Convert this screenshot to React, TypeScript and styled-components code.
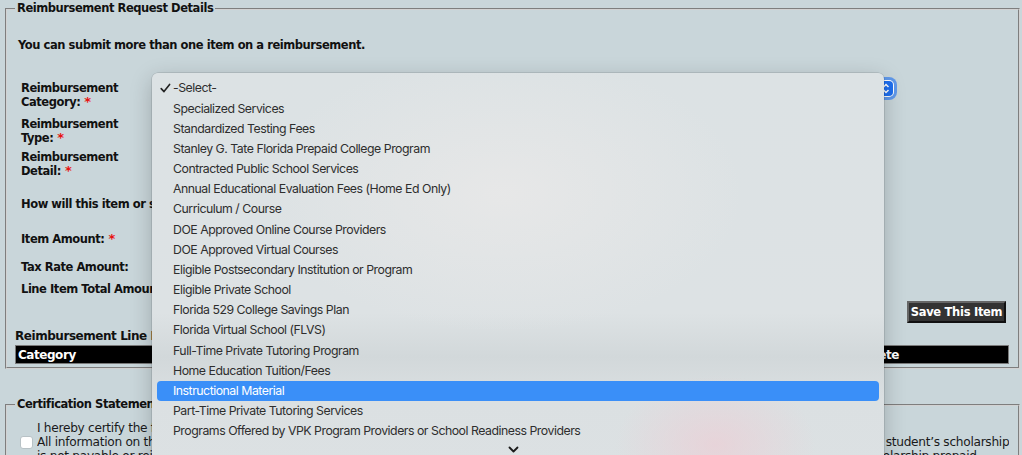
import React from "react";
import styled, { createGlobalStyle } from "styled-components";

const GlobalStyle = createGlobalStyle`
  html, body { margin: 0; padding: 0; }
  body {
    background: #c9d6da;
    font-family: "DejaVu Sans", Verdana, sans-serif;
    color: #111;
  }
`;

const Page = styled.div`
  position: relative;
  width: 1022px;
  height: 455px;
  overflow: hidden;
  background: #c9d6da;
`;

const FieldSet = styled.fieldset<{ $top?: number; $height?: number }>`
  margin: ${(p) => p.$top ?? 0}px 2px 0 5px;
  padding: 0 9px 0 9px;
  border: 2px groove #d2d2d2;
  height: ${(p) => (p.$height ? `${p.$height}px` : "auto")};
  box-sizing: border-box;
  min-width: 0;
`;

const Legend = styled.legend`
  padding: 0 2px;
  margin-left: -1px;
  font-family: "DejaVu Sans", Verdana, sans-serif;
  font-weight: bold;
  font-size: 11.5px;
  letter-spacing: -0.45px;
  line-height: 17px;
  color: #111;
`;

const Intro = styled.p`
  margin: 20px 0 0 2px;
  font-weight: bold;
  font-size: 11.5px;
  letter-spacing: -0.45px;
  line-height: 16px;
`;

const FormRow = styled.div<{ $gap: number }>`
  display: grid;
  grid-template-columns: 135px 1fr;
  align-items: start;
  margin-top: ${(p) => p.$gap}px;
  padding-left: 5px;
`;

const Label = styled.div`
  font-weight: bold;
  font-size: 11.5px;
  letter-spacing: -0.45px;
  line-height: 14px;
  white-space: nowrap;
`;

const Req = styled.span`
  color: #e8110e;
  font-size: 13px;
  margin-left: 4px;
`;

const SelectBox = styled.div`
  margin-top: -1px;
  width: 738px;
  height: 17px;
  border-radius: 5px;
  background: #fff;
  box-shadow: 0 0 0 3px rgba(40, 120, 245, 0.65);
  display: flex;
  justify-content: flex-end;
  align-items: center;
  padding-right: 1px;
  box-sizing: border-box;
`;

const Stepper = styled.div`
  width: 14px;
  height: 15px;
  border-radius: 4px;
  background: #1e6ff0;
  display: flex;
  align-items: center;
  justify-content: center;
`;

const ButtonRow = styled.div`
  display: flex;
  justify-content: flex-end;
  margin-top: 5px;
  padding-right: 3px;
`;

const SaveButton = styled.button`
  font-family: "DejaVu Sans", Verdana, sans-serif;
  font-weight: bold;
  font-size: 11.5px;
  letter-spacing: -0.3px;
  color: #fff;
  background: #333;
  border: 2px outset #666;
  height: 22px;
  width: 99px;
  padding: 0;
  cursor: pointer;
`;

const TableTitle = styled.div`
  margin-top: 6px;
  margin-left: -1px;
  font-weight: bold;
  font-size: 12px;
  letter-spacing: -0.45px;
  line-height: 14px;
`;

const HeaderBar = styled.div`
  margin: 2px 0 0 -1px;
  height: 17px;
  background: #000;
  border: 1px solid #7a7a7a;
  display: flex;
  justify-content: space-between;
  align-items: center;
  padding: 0 109px 0 2px;
  color: #fff;
  font-weight: bold;
  font-size: 12px;
  letter-spacing: -0.45px;
`;

const CertText = styled.div`
  display: grid;
  grid-template-columns: 12px 1fr;
  column-gap: 5px;
  margin-top: 9px;
  padding-left: 4px;
  font-family: "DejaVu Sans", "Lucida Grande", sans-serif;
  font-size: 12.2px;
  letter-spacing: -0.3px;
  line-height: 13.8px;
  color: #1a1a1a;
`;

const CheckBox = styled.span`
  grid-row: 2;
  grid-column: 1;
  margin-top: 0px;
  width: 11px;
  height: 11px;
  border-radius: 3px;
  background: #fff;
  border: 0.5px solid #b8c2c6;
`;

const CertLine = styled.div<{ $row: number }>`
  grid-column: 2;
  grid-row: ${(p) => p.$row};
  display: grid;
  grid-template-columns: 1fr 146px;
  white-space: nowrap;
  overflow: hidden;
`;

const Menu = styled.div`
  position: absolute;
  left: 152px;
  top: 73px;
  width: 732px;
  height: 400px;
  border-radius: 6px;
  box-sizing: border-box;
  padding: 5.4px 5px 0;
  background:
    radial-gradient(ellipse 100px 70px at 77% 93%, rgba(236, 206, 213, 0.7), rgba(236, 206, 213, 0) 100%),
    radial-gradient(ellipse 240px 140px at 48% 30%, rgba(232, 232, 232, 0.9), rgba(232, 232, 232, 0) 100%),
    linear-gradient(180deg, #dce2e4 0%, #dde2e4 60%, #d2d8da 71%, #dbe0e2 82%, #dce1e3 100%);
  box-shadow: 0 6px 22px rgba(0, 0, 0, 0.22), 0 0 0 0.5px rgba(0, 0, 0, 0.18);
  font-family: Inter, "Noto Sans", sans-serif;
  font-size: 12.3px;
  letter-spacing: -0.48px;
  color: #2e2e2e;
`;

const Item = styled.div<{ $active?: boolean }>`
  position: relative;
  height: 20.18px;
  line-height: 20.18px;
  padding-left: 16px;
  border-radius: 4px;
  white-space: nowrap;
  background: ${(p) => (p.$active ? "#3a8ff8" : "transparent")};
  color: ${(p) => (p.$active ? "#fff" : "#2e2e2e")};
`;

const Check = styled.svg`
  position: absolute;
  left: 3px;
  top: 5px;
`;

const ScrollHint = styled.div`
  display: flex;
  justify-content: center;
  margin-top: 5px;
  padding-right: 10px;
`;

const items = [
  "-Select-",
  "Specialized Services",
  "Standardized Testing Fees",
  "Stanley G. Tate Florida Prepaid College Program",
  "Contracted Public School Services",
  "Annual Educational Evaluation Fees (Home Ed Only)",
  "Curriculum / Course",
  "DOE Approved Online Course Providers",
  "DOE Approved Virtual Courses",
  "Eligible Postsecondary Institution or Program",
  "Eligible Private School",
  "Florida 529 College Savings Plan",
  "Florida Virtual School (FLVS)",
  "Full-Time Private Tutoring Program",
  "Home Education Tuition/Fees",
  "Instructional Material",
  "Part-Time Private Tutoring Services",
  "Programs Offered by VPK Program Providers or School Readiness Providers",
];

export default function App() {
  return (
    <Page>
      <GlobalStyle />
      <FieldSet $height={369}>
        <Legend>Reimbursement Request Details</Legend>
        <Intro>You can submit more than one item on a reimbursement.</Intro>

        <FormRow $gap={28}>
          <Label>
            Reimbursement
            <br />
            Category:<Req>*</Req>
          </Label>
          <SelectBox>
            <Stepper>
              <svg width="8" height="11" viewBox="0 0 8 11">
                <path d="M1.5 4 L4 1.5 L6.5 4 M1.5 7 L4 9.5 L6.5 7" fill="none" stroke="#fff" strokeWidth="1.5" />
              </svg>
            </Stepper>
          </SelectBox>
        </FormRow>
        <FormRow $gap={8}>
          <Label>
            Reimbursement
            <br />
            Type:<Req>*</Req>
          </Label>
        </FormRow>
        <FormRow $gap={5}>
          <Label>
            Reimbursement
            <br />
            Detail:<Req>*</Req>
          </Label>
        </FormRow>
        <FormRow $gap={19}>
          <Label>How will this item or service be used?</Label>
        </FormRow>
        <FormRow $gap={21}>
          <Label>
            Item Amount:<Req>*</Req>
          </Label>
        </FormRow>
        <FormRow $gap={14}>
          <Label>Tax Rate Amount:</Label>
        </FormRow>
        <FormRow $gap={8}>
          <Label>Line Item Total Amount:</Label>
        </FormRow>

        <ButtonRow>
          <SaveButton type="button">Save This Item</SaveButton>
        </ButtonRow>

        <TableTitle>Reimbursement Line Items</TableTitle>
        <HeaderBar>
          <span>Category</span>
          <span>Delete</span>
        </HeaderBar>
      </FieldSet>

      <FieldSet $top={27}>
        <Legend>Certification Statement</Legend>
        <CertText>
          <CertLine $row={1}>
            <span>I hereby certify the following:</span>
          </CertLine>
          <CheckBox />
          <CertLine $row={2}>
            <span>All information on this reimbursement request is accurate and complete, and the items are eligible under</span>
            <span>the student’s scholarship</span>
          </CertLine>
          <CertLine $row={3}>
            <span>is not payable or reimbursable by any other source, including the</span>
            <span>scholarship prepaid</span>
          </CertLine>
        </CertText>
      </FieldSet>

      <Menu>
        {items.map((t, i) => (
          <Item key={t} $active={i === 15}>
            {i === 0 && (
              <Check width="11" height="10" viewBox="0 0 11 10">
                <path d="M1.2 5.6 L4 8.6 L9.6 1.4" fill="none" stroke="#222" strokeWidth="1.6" strokeLinecap="round" strokeLinejoin="round" />
              </Check>
            )}
            {t}
          </Item>
        ))}
        <ScrollHint>
          <svg width="11" height="7" viewBox="0 0 11 7">
            <path d="M1.5 1.5 L5.5 5.5 L9.5 1.5" fill="none" stroke="#1a1a1a" strokeWidth="1.8" strokeLinecap="round" strokeLinejoin="round" />
          </svg>
        </ScrollHint>
      </Menu>
    </Page>
  );
}
